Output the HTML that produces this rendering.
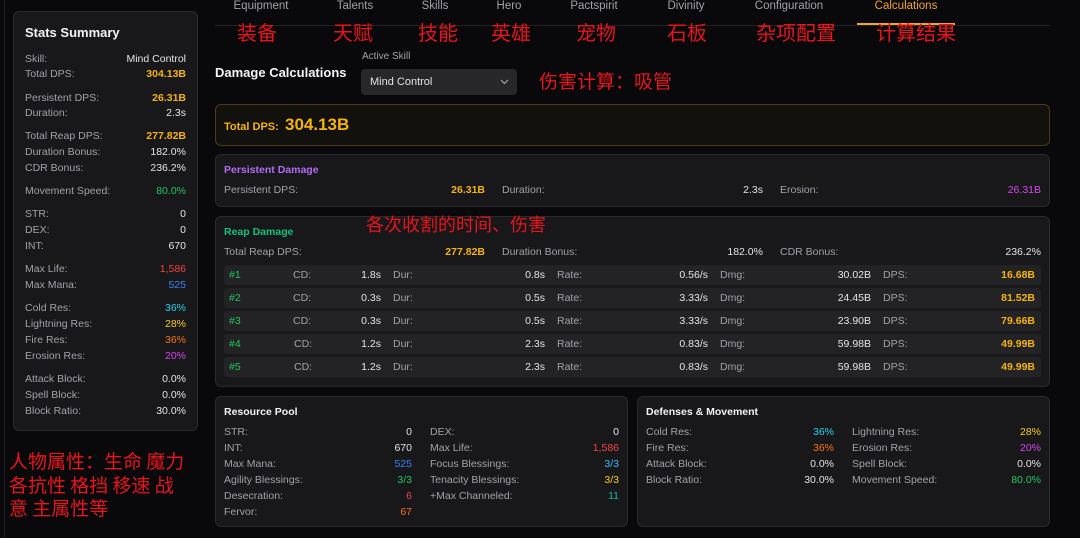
<!DOCTYPE html>
<html><head><meta charset="utf-8"><style>
*{margin:0;padding:0;box-sizing:border-box}
body{width:1080px;height:538px;background:#09090b;font-family:"Liberation Sans","Noto Sans CJK SC",sans-serif;color:#e4e4e7;position:relative;overflow:hidden;font-size:11px}
.a{position:absolute}
.p{position:absolute;background:#18181b;border:1px solid #2a2a2e;border-radius:6px}
.r{position:absolute;display:flex;justify-content:space-between;height:14px;line-height:14px;font-size:10.5px}
.r span:first-child{color:#a1a1aa}
.cn{position:absolute;color:#e8141b;font-family:"Noto Sans CJK SC",sans-serif;white-space:nowrap;line-height:1}
.tab{position:absolute;top:0;font-size:11.5px;color:#a1a1aa;transform:translateX(-50%);line-height:12px}
.o{color:#f5b30b;font-weight:bold}.w{color:#e4e4e7}.g{color:#22c55e}.re{color:#ef4444}.bl{color:#3b82f6}.cy{color:#22d3ee}.ye{color:#facc15}.or{color:#f97316}.pu{color:#d946ef}
.t{position:absolute;font-weight:bold;font-size:10.5px}
.rw{position:absolute;left:224px;width:817px;height:20px;background:#232326;border-radius:3px;font-size:10.5px;line-height:20px}
.rw span{position:absolute}
.lb{color:#a1a1aa}
</style></head><body>
<div class="a" style="left:4px;top:0;width:1px;height:538px;background:#1e1e21"></div>
<!-- left panel -->
<div class="p" style="left:13px;top:11px;width:185px;height:420px"></div>
<div class="a" style="left:25px;top:25px;font-size:13px;font-weight:bold;color:#f4f4f5">Stats Summary</div>
<div class="r" style="left:25px;top:52px;width:161px"><span>Skill:</span><span class="w">Mind Control</span></div>
<div class="r" style="left:25px;top:67px;width:161px"><span>Total DPS:</span><span class="o">304.13B</span></div>
<div class="r" style="left:25px;top:91px;width:161px"><span>Persistent DPS:</span><span class="o">26.31B</span></div>
<div class="r" style="left:25px;top:106px;width:161px"><span>Duration:</span><span class="w">2.3s</span></div>
<div class="r" style="left:25px;top:129px;width:161px"><span>Total Reap DPS:</span><span class="o">277.82B</span></div>
<div class="r" style="left:25px;top:145px;width:161px"><span>Duration Bonus:</span><span class="w">182.0%</span></div>
<div class="r" style="left:25px;top:161px;width:161px"><span>CDR Bonus:</span><span class="w">236.2%</span></div>
<div class="r" style="left:25px;top:184px;width:161px"><span>Movement Speed:</span><span class="g">80.0%</span></div>
<div class="r" style="left:25px;top:207px;width:161px"><span>STR:</span><span class="w">0</span></div>
<div class="r" style="left:25px;top:223px;width:161px"><span>DEX:</span><span class="w">0</span></div>
<div class="r" style="left:25px;top:239px;width:161px"><span>INT:</span><span class="w">670</span></div>
<div class="r" style="left:25px;top:262px;width:161px"><span>Max Life:</span><span class="re">1,586</span></div>
<div class="r" style="left:25px;top:278px;width:161px"><span>Max Mana:</span><span class="bl">525</span></div>
<div class="r" style="left:25px;top:301px;width:161px"><span>Cold Res:</span><span class="cy">36%</span></div>
<div class="r" style="left:25px;top:317px;width:161px"><span>Lightning Res:</span><span class="ye">28%</span></div>
<div class="r" style="left:25px;top:333px;width:161px"><span>Fire Res:</span><span class="or">36%</span></div>
<div class="r" style="left:25px;top:349px;width:161px"><span>Erosion Res:</span><span class="pu">20%</span></div>
<div class="r" style="left:25px;top:372px;width:161px"><span>Attack Block:</span><span class="w">0.0%</span></div>
<div class="r" style="left:25px;top:388px;width:161px"><span>Spell Block:</span><span class="w">0.0%</span></div>
<div class="r" style="left:25px;top:404px;width:161px"><span>Block Ratio:</span><span class="w">30.0%</span></div>
<div class="cn" style="left:9px;top:449px;font-size:19px;line-height:23.5px">人物属性：生命 魔力<br>各抗性 格挡 移速 战<br>意 主属性等</div>

<!-- tabs -->
<div class="a" style="left:215px;top:25px;width:835px;height:1px;background:#222225"></div>
<div class="a" style="left:857px;top:23px;width:98px;height:2px;background:#f5a524"></div>
<div class="tab" style="left:261px">Equipment</div>
<div class="tab" style="left:355px">Talents</div>
<div class="tab" style="left:435px">Skills</div>
<div class="tab" style="left:509px">Hero</div>
<div class="tab" style="left:594px">Pactspirit</div>
<div class="tab" style="left:686px">Divinity</div>
<div class="tab" style="left:789px">Configuration</div>
<div class="tab" style="left:906px;color:#f5a524">Calculations</div>
<div class="cn" style="left:237px;top:22px;font-size:20px">装备</div>
<div class="cn" style="left:333px;top:22px;font-size:20px">天赋</div>
<div class="cn" style="left:418px;top:22px;font-size:20px">技能</div>
<div class="cn" style="left:491px;top:22px;font-size:20px">英雄</div>
<div class="cn" style="left:576px;top:22px;font-size:20px">宠物</div>
<div class="cn" style="left:667px;top:22px;font-size:20px">石板</div>
<div class="cn" style="left:756px;top:22px;font-size:20px">杂项配置</div>
<div class="cn" style="left:876px;top:22px;font-size:20px">计算结果</div>

<div class="a" style="left:215px;top:65px;font-size:13px;font-weight:bold;color:#f4f4f5">Damage Calculations</div>
<div class="a" style="left:362px;top:51px;font-size:10px;color:#a1a1aa">Active Skill</div>
<div class="a" style="left:361px;top:69px;width:156px;height:26px;background:#27272a;border-radius:4px;font-size:11px;line-height:26px;padding-left:9px;color:#e4e4e7">Mind Control
<svg class="a" style="left:139px;top:10px" width="9" height="6" viewBox="0 0 9 6"><path d="M1 1l3.5 3.5L8 1" stroke="#a1a1aa" fill="none" stroke-width="1.2"/></svg></div>
<div class="cn" style="left:539px;top:71px;font-size:19px">伤害计算：吸管</div>

<!-- total -->
<div class="a" style="left:215px;top:104px;width:835px;height:42px;border:1px solid #4a3b1a;border-radius:6px;background:#12110e"></div>
<div class="a o" style="left:224px;top:121px;font-size:11px">Total DPS:</div>
<div class="a o" style="left:285px;top:115px;font-size:17px">304.13B</div>

<!-- persistent -->
<div class="p" style="left:215px;top:154px;width:835px;height:53px"></div>
<div class="t" style="left:224px;top:164px;color:#b36bf5">Persistent Damage</div>
<div class="r" style="left:224px;top:183px;width:261px"><span>Persistent DPS:</span><span class="o">26.31B</span></div>
<div class="r" style="left:502px;top:183px;width:261px"><span>Duration:</span><span class="w">2.3s</span></div>
<div class="r" style="left:780px;top:183px;width:261px"><span>Erosion:</span><span class="pu">26.31B</span></div>

<!-- reap -->
<div class="p" style="left:215px;top:216px;width:835px;height:171px"></div>
<div class="t" style="left:224px;top:226px;color:#10c07a">Reap Damage</div>
<div class="cn" style="left:366px;top:215px;font-size:18px">各次收割的时间、伤害</div>
<div class="r" style="left:224px;top:245px;width:261px"><span>Total Reap DPS:</span><span class="o">277.82B</span></div>
<div class="r" style="left:502px;top:245px;width:261px"><span>Duration Bonus:</span><span class="w">182.0%</span></div>
<div class="r" style="left:780px;top:245px;width:261px"><span>CDR Bonus:</span><span class="w">236.2%</span></div>

<div class="rw" style="top:265px"><span class="g" style="left:5px">#1</span><span class="lb" style="left:69px">CD:</span><span class="w" style="right:660px">1.8s</span><span class="lb" style="left:169px">Dur:</span><span class="w" style="right:496px">0.8s</span><span class="lb" style="left:333px">Rate:</span><span class="w" style="right:333px">0.56/s</span><span class="lb" style="left:496px">Dmg:</span><span class="w" style="right:170px">30.02B</span><span class="lb" style="left:659px">DPS:</span><span class="o" style="right:6px">16.68B</span></div>
<div class="rw" style="top:288px"><span class="g" style="left:5px">#2</span><span class="lb" style="left:69px">CD:</span><span class="w" style="right:660px">0.3s</span><span class="lb" style="left:169px">Dur:</span><span class="w" style="right:496px">0.5s</span><span class="lb" style="left:333px">Rate:</span><span class="w" style="right:333px">3.33/s</span><span class="lb" style="left:496px">Dmg:</span><span class="w" style="right:170px">24.45B</span><span class="lb" style="left:659px">DPS:</span><span class="o" style="right:6px">81.52B</span></div>
<div class="rw" style="top:311px"><span class="g" style="left:5px">#3</span><span class="lb" style="left:69px">CD:</span><span class="w" style="right:660px">0.3s</span><span class="lb" style="left:169px">Dur:</span><span class="w" style="right:496px">0.5s</span><span class="lb" style="left:333px">Rate:</span><span class="w" style="right:333px">3.33/s</span><span class="lb" style="left:496px">Dmg:</span><span class="w" style="right:170px">23.90B</span><span class="lb" style="left:659px">DPS:</span><span class="o" style="right:6px">79.66B</span></div>
<div class="rw" style="top:334px"><span class="g" style="left:5px">#4</span><span class="lb" style="left:70px">CD:</span><span class="w" style="right:660px">1.2s</span><span class="lb" style="left:169px">Dur:</span><span class="w" style="right:496px">2.3s</span><span class="lb" style="left:333px">Rate:</span><span class="w" style="right:333px">0.83/s</span><span class="lb" style="left:496px">Dmg:</span><span class="w" style="right:170px">59.98B</span><span class="lb" style="left:659px">DPS:</span><span class="o" style="right:6px">49.99B</span></div>
<div class="rw" style="top:357px"><span class="g" style="left:5px">#5</span><span class="lb" style="left:70px">CD:</span><span class="w" style="right:660px">1.2s</span><span class="lb" style="left:169px">Dur:</span><span class="w" style="right:496px">2.3s</span><span class="lb" style="left:333px">Rate:</span><span class="w" style="right:333px">0.83/s</span><span class="lb" style="left:496px">Dmg:</span><span class="w" style="right:170px">59.98B</span><span class="lb" style="left:659px">DPS:</span><span class="o" style="right:6px">49.99B</span></div>

<!-- resource -->
<div class="p" style="left:215px;top:396px;width:413px;height:131px"></div>
<div class="t" style="left:224px;top:406px;color:#f4f4f5">Resource Pool</div>
<div class="r" style="left:224px;top:425px;width:188px"><span>STR:</span><span class="w">0</span></div>
<div class="r" style="left:224px;top:441px;width:188px"><span>INT:</span><span class="w">670</span></div>
<div class="r" style="left:224px;top:457px;width:188px"><span>Max Mana:</span><span class="bl">525</span></div>
<div class="r" style="left:224px;top:473px;width:188px"><span>Agility Blessings:</span><span class="g">3/3</span></div>
<div class="r" style="left:224px;top:489px;width:188px"><span>Desecration:</span><span style="color:#f43f5e">6</span></div>
<div class="r" style="left:224px;top:505px;width:188px"><span>Fervor:</span><span class="or">67</span></div>
<div class="r" style="left:430px;top:425px;width:189px"><span>DEX:</span><span class="w">0</span></div>
<div class="r" style="left:430px;top:441px;width:189px"><span>Max Life:</span><span class="re">1,586</span></div>
<div class="r" style="left:430px;top:457px;width:189px"><span>Focus Blessings:</span><span style="color:#38bdf8">3/3</span></div>
<div class="r" style="left:430px;top:473px;width:189px"><span>Tenacity Blessings:</span><span class="ye">3/3</span></div>
<div class="r" style="left:430px;top:489px;width:189px"><span>+Max Channeled:</span><span style="color:#14b8a6">11</span></div>

<!-- defenses -->
<div class="p" style="left:637px;top:396px;width:413px;height:131px"></div>
<div class="t" style="left:646px;top:406px;color:#f4f4f5">Defenses &amp; Movement</div>
<div class="r" style="left:646px;top:425px;width:188px"><span>Cold Res:</span><span class="cy">36%</span></div>
<div class="r" style="left:646px;top:441px;width:188px"><span>Fire Res:</span><span class="or">36%</span></div>
<div class="r" style="left:646px;top:457px;width:188px"><span>Attack Block:</span><span class="w">0.0%</span></div>
<div class="r" style="left:646px;top:473px;width:188px"><span>Block Ratio:</span><span class="w">30.0%</span></div>
<div class="r" style="left:852px;top:425px;width:189px"><span>Lightning Res:</span><span class="ye">28%</span></div>
<div class="r" style="left:852px;top:441px;width:189px"><span>Erosion Res:</span><span class="pu">20%</span></div>
<div class="r" style="left:852px;top:457px;width:189px"><span>Spell Block:</span><span class="w">0.0%</span></div>
<div class="r" style="left:852px;top:473px;width:189px"><span>Movement Speed:</span><span class="g">80.0%</span></div>
</body></html>
